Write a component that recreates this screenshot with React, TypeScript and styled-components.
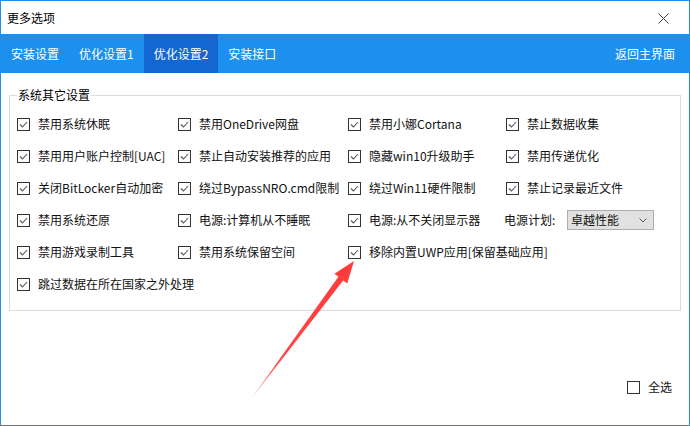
import React, { useState } from 'react';
import styled, { createGlobalStyle } from 'styled-components';

const GlobalStyle = createGlobalStyle`
  html, body {
    margin: 0;
    padding: 0;
    background: #fff;
  }
  body {
    font-family: "Noto Sans CJK SC", "Microsoft YaHei", "DejaVu Sans", sans-serif;
    font-size: 12px;
    color: #111;
  }
`

const Window = styled.div`
  position: relative;
  width: 690px;
  height: 426px;
  box-sizing: border-box;
  border: 1px solid #1c90ec;
  display: flex;
  flex-direction: column;
  background: #fff;
  overflow: hidden;
`

const TitleBar = styled.div`
  height: 33px;
  display: flex;
  align-items: center;
  justify-content: space-between;
  padding: 0 20px 0 6px;
  font-size: 12px;
  color: #000;
`

const CloseButton = styled.div`
  width: 12px;
  height: 12px;
  display: flex;
  align-items: center;
  justify-content: center;
  margin-top: 1px;
`

const TabBar = styled.div`
  height: 39px;
  background: #1c90ec;
  display: flex;
  align-items: stretch;
  padding-right: 4px;
`

const Tab = styled.div<{ active?: boolean; right?: boolean }>`
  display: flex;
  align-items: center;
  padding: 0 10px;
  color: #fff;
  font-size: 12px;
  background: ${p => (p.active ? '#1467d3' : 'transparent')};
  margin-left: ${p => (p.right ? 'auto' : '0')};
  cursor: pointer;
`

const GroupBox = styled.fieldset`
  margin: 14px 8px 0 8px;
  padding: 5px 0 10px 7px;
  border: 1px solid #dcdcdc;
  min-width: 0;

  legend {
    padding: 0 1px;
    line-height: 16px;
    font-size: 12px;
    color: #000;
  }
`

const Grid = styled.div`
  display: grid;
  grid-template-columns: 161px 170px 158px 1fr;
  grid-auto-rows: 32px;
`

const Cell = styled.div`
  display: flex;
  align-items: center;
  white-space: nowrap;
`

const CheckLabel = styled.label`
  display: flex;
  align-items: center;
  gap: 8px;
  line-height: 16px;
  color: #111;
  cursor: pointer;
`

const Box = styled.span`
  width: 13px;
  height: 13px;
  box-sizing: border-box;
  border: 1px solid #333;
  background: #fff;
  display: inline-flex;
  align-items: center;
  justify-content: center;
  flex-shrink: 0;
`

const PlanLabel = styled.span`
  line-height: 16px;
  width: 63px;
  margin-left: -2px;
`

const Combo = styled.div`
  width: 87px;
  height: 20px;
  box-sizing: border-box;
  background: #e1e1e1;
  border: 1px solid #adadad;
  display: flex;
  align-items: center;
  justify-content: space-between;
  padding: 0 6px 0 3px;
  line-height: 16px;
`

const Footer = styled.div`
  flex: 1;
  display: flex;
  justify-content: flex-end;
  align-items: flex-end;
  padding: 0 17px 30px 0;
`

const ArrowLayer = styled.svg`
  position: absolute;
  left: 0;
  top: 0;
  pointer-events: none;
`

function Checkbox(props: { label: string; checked: boolean; onToggle: () => void }) {
  const { label, checked, onToggle } = props
  return (
    <CheckLabel onClick={onToggle}>
      <Box>
        {checked && (
          <svg width="11" height="11" viewBox="0 0 11 11">
            <path d="M2 5.5 L4.5 8 L9 3" fill="none" stroke="#555" strokeWidth="1.1" />
          </svg>
        )}
      </Box>
      <span>{label}</span>
    </CheckLabel>
  )
}

const rows: (string | null)[][] = [
  ['禁用系统休眠', '禁用OneDrive网盘', '禁用小娜Cortana', '禁止数据收集'],
  ['禁用用户账户控制[UAC]', '禁止自动安装推荐的应用', '隐藏win10升级助手', '禁用传递优化'],
  ['关闭BitLocker自动加密', '绕过BypassNRO.cmd限制', '绕过Win11硬件限制', '禁止记录最近文件'],
  ['禁用系统还原', '电源:计算机从不睡眠', '电源:从不关闭显示器', 'PLAN'],
  ['禁用游戏录制工具', '禁用系统保留空间', '移除内置UWP应用[保留基础应用]', null],
  ['跳过数据在所在国家之外处理', null, null, null],
]

const tabs = ['安装设置', '优化设置1', '优化设置2', '安装接口']

function App() {
  const [checked, setChecked] = useState<Record<string, boolean>>(() => {
    const init: Record<string, boolean> = {}
    rows.flat().forEach(l => {
      if (l && l !== 'PLAN') init[l] = true
    })
    return init
  })
  const [all, setAll] = useState(false)
  const [activeTab, setActiveTab] = useState(2)

  function toggle(label: string) {
    setChecked(c => ({ ...c, [label]: !c[label] }))
  }

  return (
    <Window>
      <GlobalStyle />
      <TitleBar>
        <span>更多选项</span>
        <CloseButton>
          <svg width="11" height="11" viewBox="0 0 11 11">
            <path d="M0.5 0.5 L10.5 10.5 M10.5 0.5 L0.5 10.5" stroke="#444" strokeWidth="1" />
          </svg>
        </CloseButton>
      </TitleBar>
      <TabBar>
        {tabs.map((t, i) => (
          <Tab key={t} active={i === activeTab} onClick={() => setActiveTab(i)}>
            {t}
          </Tab>
        ))}
        <Tab right>返回主界面</Tab>
      </TabBar>

      <GroupBox>
        <legend>系统其它设置</legend>
        <Grid>
          {rows.map((row, r) =>
            row.map((label, c) => (
              <Cell key={`${r}-${c}`}>
                {label === 'PLAN' ? (
                  <>
                    <PlanLabel>电源计划:</PlanLabel>
                    <Combo>
                      <span>卓越性能</span>
                      <svg width="8" height="5" viewBox="0 0 8 5">
                        <path d="M0.5 0.5 L4 4 L7.5 0.5" fill="none" stroke="#555" strokeWidth="1" />
                      </svg>
                    </Combo>
                  </>
                ) : label ? (
                  <Checkbox label={label} checked={!!checked[label]} onToggle={() => toggle(label)} />
                ) : null}
              </Cell>
            ))
          )}
        </Grid>
      </GroupBox>

      <Footer>
        <Checkbox label="全选" checked={all} onToggle={() => setAll(a => !a)} />
      </Footer>

      <ArrowLayer width="690" height="426" viewBox="0 0 690 426">
        <defs>
          <linearGradient id="arrowFade" x1="250" y1="398" x2="353" y2="260" gradientUnits="userSpaceOnUse">
            <stop offset="0" stopColor="#ff4a4a" stopOpacity="0.35" />
            <stop offset="0.3" stopColor="#ff3c3c" stopOpacity="0.95" />
            <stop offset="1" stopColor="#ff3b3b" />
          </linearGradient>
        </defs>
        <polygon
          points="353,260 346.2,282.4 342.2,279.4 250,398 337.4,275.8 333.4,272.8"
          fill="url(#arrowFade)"
        />
      </ArrowLayer>
    </Window>
  )
}

export default App;
